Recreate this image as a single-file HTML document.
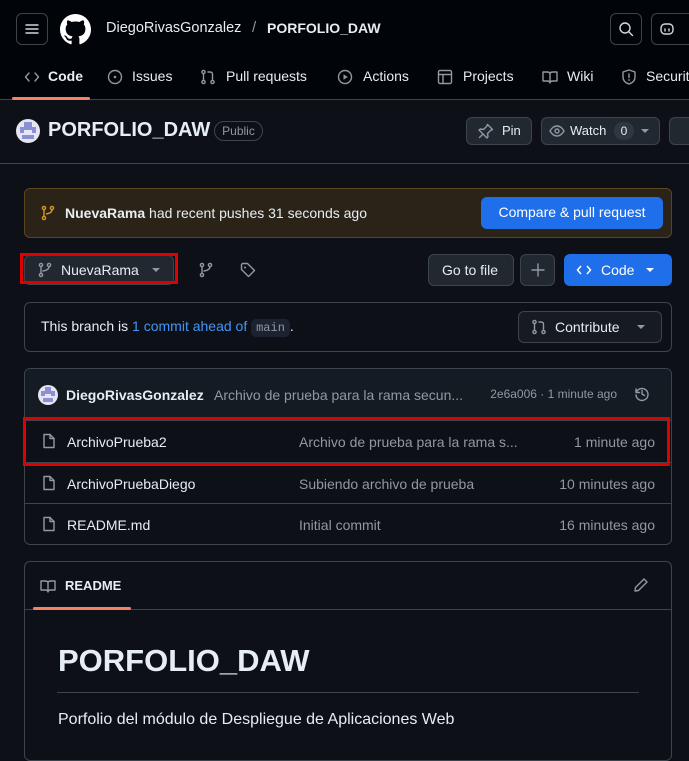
<!DOCTYPE html>
<html><head><meta charset="utf-8"><style>
*{box-sizing:border-box;margin:0;padding:0}
body{width:689px;height:749px;overflow:hidden;background:#0d1117;color:#e6edf3;font-family:"Liberation Sans",sans-serif;font-size:14px;position:relative}
.a{position:absolute;white-space:nowrap}
.btn{position:absolute;border:1px solid #3d444d;background:#212830;border-radius:6px}
.mut{color:#9198a1}
svg{position:absolute}
.ic{fill:none;stroke:#9198a1;stroke-width:1.4;stroke-linecap:round;stroke-linejoin:round}
.box{position:absolute;border:1px solid #3d444d;border-radius:6px}
.red{position:absolute;border:3px solid #e00000}
</style></head><body>
<div class="a" style="left:0;top:0;width:689px;height:100px;background:#010409;border-bottom:1px solid #3d444d"></div>
<div class="btn" style="left:16px;top:13px;width:32px;height:32px;background:transparent"></div>
<svg style="left:24px;top:21px" width="16" height="16"><path class="ic" d="M2 4h12M2 8h12M2 12h12" style="stroke:#d1d7e0"/></svg>
<svg style="left:60px;top:14px" width="31" height="31" viewBox="0 0 16 16"><path fill="#fff" d="M8 0C3.58 0 0 3.58 0 8c0 3.54 2.290 6.53 5.47 7.59.4.07.55-.17.55-.38 0-.19-.01-.82-.01-1.49-2.01.37-2.530-.49-2.69-.94-.09-.23-.48-.94-.82-1.13-.28-.15-.68-.52-.01-.53.63-.01 1.08.58 1.23.82.72 1.21 1.87.87 2.33.66.07-.52.28-.87.51-1.07-1.78-.2-3.64-.89-3.64-3.95 0-.87.31-1.59.82-2.15-.08-.2-.36-1.02.08-2.12 0 0 .67-.21 2.2.82.64-.18 1.32-.27 2-.27.68 0 1.36.09 2 .27 1.53-1.04 2.2-.82 2.2-.82.44 1.1.16 1.92.08 2.12.51.56.82 1.27.82 2.15 0 3.07-1.87 3.75-3.65 3.95.29.25.54.73.54 1.48 0 1.07-.01 1.930-.01 2.2 0 .21.15.46.55.38A8.013 8.013 0 0016 8c0-4.42-3.58-8-8-8z"/></svg>
<div class="a" style="left:106px;top:20px;font-size:14.5px">DiegoRivasGonzalez</div>
<div class="a mut" style="left:252px;top:19px;font-size:15px">/</div>
<div class="a" style="left:267px;top:20px;font-weight:bold;font-size:14px">PORFOLIO_DAW</div>
<div class="btn" style="left:610px;top:13px;width:32px;height:32px;background:transparent"></div>
<svg style="left:618px;top:21px" width="16" height="16"><circle class="ic" cx="7" cy="7" r="5" style="stroke:#d1d7e0"/><path class="ic" d="M11 11l3.5 3.5" style="stroke:#d1d7e0"/></svg>
<div class="btn" style="left:651px;top:13px;width:50px;height:32px;background:transparent"></div>
<svg style="left:659px;top:21px" width="16" height="16"><rect class="ic" x="2" y="3" width="12" height="10" rx="4" style="stroke:#d1d7e0"/><path class="ic" d="M6 8v2M10 8v2" style="stroke:#d1d7e0"/></svg>

<svg style="left:24px;top:69px" width="16" height="16"><path class="ic" d="M5 4L1.5 8 5 12M11 4l3.5 4L11 12"/></svg>
<div class="a" style="left:48px;top:68px;font-weight:bold">Code</div>
<div class="a" style="left:12px;top:97px;width:78px;height:3px;background:#f78166;border-radius:2px"></div>
<svg style="left:107px;top:69px" width="16" height="16"><circle class="ic" cx="8" cy="8" r="6.5"/><circle cx="8" cy="8" r="1.3" fill="#9198a1"/></svg>
<div class="a" style="left:132px;top:68px">Issues</div>
<svg style="left:200px;top:69px" width="16" height="16"><circle class="ic" cx="3.5" cy="3" r="1.6"/><circle class="ic" cx="3.5" cy="13" r="1.6"/><circle class="ic" cx="12.5" cy="13" r="1.6"/><path class="ic" d="M3.5 4.6v6.8M12.5 11.4V5.5Q12.5 3 10 3H8"/></svg>
<div class="a" style="left:226px;top:68px">Pull requests</div>
<svg style="left:337px;top:69px" width="16" height="16"><circle class="ic" cx="8" cy="8" r="6.5"/><path d="M6.5 5.2v5.6L10.8 8z" fill="#9198a1"/></svg>
<div class="a" style="left:363px;top:68px">Actions</div>
<svg style="left:437px;top:69px" width="16" height="16"><rect class="ic" x="1.5" y="1.5" width="13" height="13" rx="1.5"/><path class="ic" d="M1.5 5.5h13M6 5.5v9"/></svg>
<div class="a" style="left:463px;top:68px">Projects</div>
<svg style="left:542px;top:69px" width="16" height="16"><path class="ic" d="M1 3h4q3 0 3 2v9q0-2-3-2H1zM15 3h-4q-3 0-3 2v9q0-2 3-2h4z"/></svg>
<div class="a" style="left:567px;top:68px">Wiki</div>
<svg style="left:621px;top:69px" width="16" height="16"><path class="ic" d="M8 1l6 2v5q0 5-6 7-6-2-6-7V3z"/><path class="ic" d="M8 5v3.5"/><circle cx="8" cy="11" r=".9" fill="#9198a1"/></svg>
<div class="a" style="left:646px;top:68px">Security</div>

<svg style="left:16px;top:119px" width="24" height="24"><circle cx="12" cy="12" r="12" fill="#e6e6f2"/><path d="M8 3h8v5h4v6h-4v-3H8v3H4V8h4z" fill="#8b8fd6"/><path d="M6 16h12v4H6z" fill="#8b8fd6"/></svg>
<div class="a" style="left:48px;top:119px;font-size:20px;font-weight:bold">PORFOLIO_DAW</div>
<div class="a mut" style="left:214px;top:121px;width:49px;height:20px;border:1px solid #3d444d;border-radius:10px;font-size:12px;text-align:center;line-height:18px">Public</div>
<div class="btn" style="left:466px;top:117px;width:66px;height:28px"></div>
<svg style="left:478px;top:123px" width="16" height="16"><path class="ic" d="M9.5 1.5l5 5-2 1-3 3 .5 3L9 15 1 7l1.5-1 3 .5 3-3zM1.5 14.5L5 11"/></svg>
<div class="a" style="left:502px;top:123px;font-size:13px">Pin</div>
<div class="btn" style="left:541px;top:117px;width:119px;height:28px"></div>
<svg style="left:549px;top:123px" width="16" height="16"><path class="ic" d="M1 8q3-5 7-5t7 5q-3 5-7 5T1 8z"/><circle class="ic" cx="8" cy="8" r="2"/></svg>
<div class="a" style="left:570px;top:123px;font-size:13px">Watch</div>
<div class="a" style="left:614px;top:122px;width:20px;height:18px;border-radius:9px;background:#2f3742;font-size:12px;text-align:center;line-height:18px">0</div>
<svg style="left:640px;top:127px" width="10" height="8"><path d="M1 2h8L5 6z" fill="#9198a1"/></svg>
<div class="btn" style="left:669px;top:117px;width:40px;height:28px"></div>
<div class="a" style="left:0;top:163px;width:689px;height:1px;background:#3d444d"></div>

<div class="a" style="left:24px;top:188px;width:648px;height:50px;background:#2b2318;border:1px solid #5a4521;border-radius:6px"></div>
<svg style="left:40px;top:205px" width="16" height="16"><circle cx="4" cy="3" r="1.6" fill="none" stroke="#d29922" stroke-width="1.4"/><circle cx="4" cy="13" r="1.6" fill="none" stroke="#d29922" stroke-width="1.4"/><circle cx="12" cy="3" r="1.6" fill="none" stroke="#d29922" stroke-width="1.4"/><path d="M4 4.6v6.8M12 4.6Q12 8 6 9" fill="none" stroke="#d29922" stroke-width="1.4"/></svg>
<div class="a" style="left:65px;top:205px"><b>NuevaRama</b> had recent pushes 31 seconds ago</div>
<div class="a" style="left:481px;top:197px;width:182px;height:32px;background:#1f6feb;border-radius:6px;text-align:center;line-height:31px;color:#fff">Compare &amp; pull request</div>

<div class="btn" style="left:24px;top:255px;width:150px;height:30px"></div>
<div class="red" style="left:20px;top:253px;width:158px;height:31px"></div>
<svg style="left:37px;top:262px" width="16" height="16"><circle class="ic" cx="4" cy="3" r="1.6"/><circle class="ic" cx="4" cy="13" r="1.6"/><circle class="ic" cx="12" cy="3" r="1.6"/><path class="ic" d="M4 4.6v6.8M12 4.6Q12 8 6 9"/></svg>
<div class="a" style="left:61px;top:262px">NuevaRama</div>
<svg style="left:151px;top:266px" width="10" height="8"><path d="M1 2h8L5 6z" fill="#9198a1"/></svg>
<svg style="left:198px;top:262px" width="16" height="16"><circle class="ic" cx="4" cy="3" r="1.6"/><circle class="ic" cx="4" cy="13" r="1.6"/><circle class="ic" cx="12" cy="3" r="1.6"/><path class="ic" d="M4 4.6v6.8M12 4.6Q12 8 6 9"/></svg>
<svg style="left:240px;top:262px" width="16" height="16"><path class="ic" d="M1.5 2.5v5l7 7 6-6-7-7h-5z"/><circle cx="5" cy="5.5" r="1" fill="#9198a1"/></svg>
<div class="btn" style="left:428px;top:254px;width:86px;height:32px"></div>
<div class="a" style="left:442px;top:262px">Go to file</div>
<div class="btn" style="left:520px;top:254px;width:35px;height:32px"></div>
<svg style="left:530px;top:262px" width="16" height="16"><path class="ic" d="M8 2v12M2 8h12"/></svg>
<div class="a" style="left:564px;top:254px;width:108px;height:32px;background:#1f6feb;border-radius:6px"></div>
<svg style="left:576px;top:262px" width="16" height="16"><path d="M5 4L1.5 8 5 12M11 4l3.5 4L11 12" fill="none" stroke="#fff" stroke-width="1.5"/></svg>
<div class="a" style="left:601px;top:262px;color:#fff">Code</div>
<svg style="left:645px;top:266px" width="10" height="8"><path d="M1 2h8L5 6z" fill="#fff"/></svg>

<div class="box" style="left:24px;top:302px;width:648px;height:50px;background:#0d1117"></div>
<div class="a" style="left:41px;top:318px">This branch is <span style="color:#4493f8">1 commit ahead of</span> <span style="background:#1b2331;border-radius:5px;padding:2px 5px;font-family:'Liberation Mono',monospace;font-size:12px;color:#9198a1">main</span>.</div>
<div class="btn" style="left:518px;top:311px;width:144px;height:32px;background:#161b22"></div>
<svg style="left:531px;top:319px" width="16" height="16"><circle class="ic" cx="3.5" cy="3" r="1.6"/><circle class="ic" cx="3.5" cy="13" r="1.6"/><circle class="ic" cx="12.5" cy="13" r="1.6"/><path class="ic" d="M3.5 4.6v6.8M12.5 11.4V5.5Q12.5 3 10 3H8"/></svg>
<div class="a" style="left:555px;top:319px">Contribute</div>
<svg style="left:636px;top:323px" width="10" height="8"><path d="M1 2h8L5 6z" fill="#9198a1"/></svg>

<div class="box" style="left:24px;top:368px;width:648px;height:177px;overflow:hidden">
<div style="position:absolute;left:0;top:0;width:648px;height:52px;background:#151b23;border-bottom:1px solid #3d444d"></div>
<div style="position:absolute;left:0;top:93px;width:648px;height:1px;background:#3d444d"></div>
<div style="position:absolute;left:0;top:134px;width:648px;height:1px;background:#3d444d"></div>
</div>
<svg style="left:38px;top:385px" width="20" height="20"><circle cx="10" cy="10" r="10" fill="#e6e6f2"/><path d="M7 2h6v4h4v5h-4V9H7v2H3V6h4z" fill="#8b8fd6"/><path d="M5 13h10v4H5z" fill="#8b8fd6"/></svg>
<div class="a" style="left:66px;top:387px;font-weight:bold">DiegoRivasGonzalez</div>
<div class="a mut" style="left:214px;top:387px">Archivo de prueba para la rama secun...</div>
<div class="a mut" style="right:72px;top:387px;font-size:12px">2e6a006 · 1 minute ago</div>
<svg style="left:634px;top:386px" width="16" height="16"><path class="ic" d="M2 3v3.5h3.5"/><path class="ic" d="M2.3 6.5A6 6 0 1 1 2 9"/><path class="ic" d="M8 4.5V8l2.5 1.5"/></svg>

<svg style="left:41px;top:433px" width="16" height="16"><path class="ic" d="M3 1.5h6l4 4v9H3z"/><path class="ic" d="M9 1.5v4h4"/></svg>
<div class="a" style="left:67px;top:434px">ArchivoPrueba2</div>
<div class="a mut" style="left:299px;top:434px">Archivo de prueba para la rama s...</div>
<div class="a mut" style="right:34px;top:434px">1 minute ago</div>
<div class="red" style="left:23px;top:417px;width:647px;height:49px"></div>
<svg style="left:41px;top:475px" width="16" height="16"><path class="ic" d="M3 1.5h6l4 4v9H3z"/><path class="ic" d="M9 1.5v4h4"/></svg>
<div class="a" style="left:67px;top:476px">ArchivoPruebaDiego</div>
<div class="a mut" style="left:299px;top:476px">Subiendo archivo de prueba</div>
<div class="a mut" style="right:34px;top:476px">10 minutes ago</div>
<svg style="left:41px;top:516px" width="16" height="16"><path class="ic" d="M3 1.5h6l4 4v9H3z"/><path class="ic" d="M9 1.5v4h4"/></svg>
<div class="a" style="left:67px;top:517px">README.md</div>
<div class="a mut" style="left:299px;top:517px">Initial commit</div>
<div class="a mut" style="right:34px;top:517px">16 minutes ago</div>

<div class="box" style="left:24px;top:561px;width:648px;height:200px"></div>
<div class="a" style="left:25px;top:609px;width:646px;height:1px;background:#3d444d"></div>
<div class="a" style="left:33px;top:607px;width:98px;height:3px;background:#f78166;border-radius:2px"></div>
<svg style="left:40px;top:578px" width="16" height="16"><path class="ic" d="M1 3h4q3 0 3 2v9q0-2-3-2H1zM15 3h-4q-3 0-3 2v9q0-2 3-2h4z"/></svg>
<div class="a" style="left:65px;top:578px;font-weight:bold;font-size:13px">README</div>
<svg style="left:633px;top:577px" width="16" height="16"><path class="ic" d="M11 2l3 3-8.5 8.5L2 14l.5-3.5z"/></svg>
<div class="a" style="left:58px;top:643px;font-size:31px;font-weight:bold">PORFOLIO_DAW</div>
<div class="a" style="left:57px;top:692px;width:582px;height:1px;background:#3d444d"></div>
<div class="a" style="left:58px;top:711px;font-size:16px">Porfolio del módulo de Despliegue de Aplicaciones Web</div>
</body></html>
